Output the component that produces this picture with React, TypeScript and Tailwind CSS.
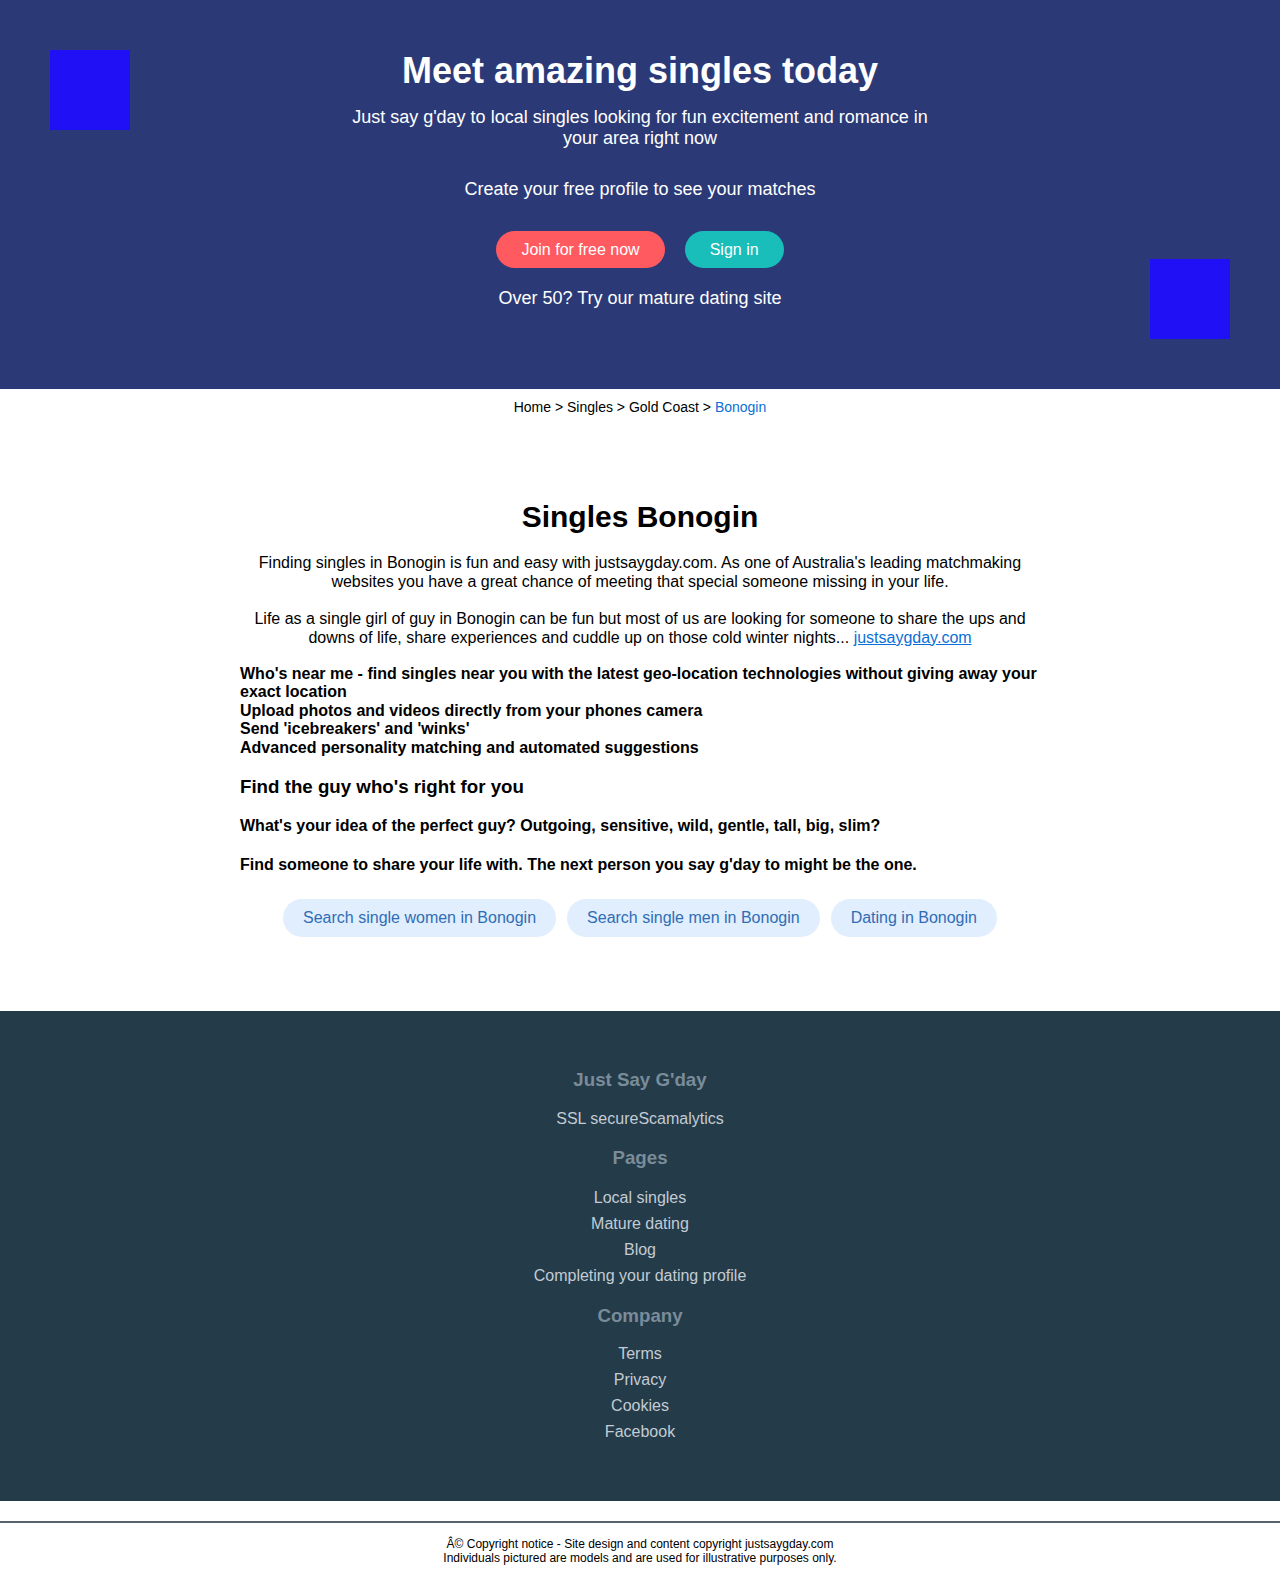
import React from "react";

const features = [
  "Who's near me - find singles near you with the latest geo-location technologies without giving away your exact location",
  "Upload photos and videos directly from your phones camera",
  "Send 'icebreakers' and 'winks'",
  "Advanced personality matching and automated suggestions",
];

const chips = [
  "Search single women in Bonogin",
  "Search single men in Bonogin",
  "Dating in Bonogin",
];

const pages = ["Local singles", "Mature dating", "Blog", "Completing your dating profile"];
const company = ["Terms", "Privacy", "Cookies", "Facebook"];

const FooterHeading: React.FC<{ children: React.ReactNode }> = ({ children }) => (
  <h4 className="text-[18.72px] font-bold leading-[21px] text-[#7a8c99]">{children}</h4>
);

const App: React.FC = () => {
  return (
    <div className="font-['Liberation_Sans',Arial,sans-serif] bg-white text-black">
      {/* hero */}
      <header className="relative bg-[#2b3a77] h-[389px] flex flex-col items-center pt-[50px] text-white text-center">
        <div className="absolute left-[50px] top-[50px] w-[80px] h-[80px] bg-[#2010f5]" />
        <div className="absolute right-[50px] top-[259px] w-[80px] h-[80px] bg-[#2010f5]" />
        <h1 className="text-[36px] font-bold leading-[41px]">Meet amazing singles today</h1>
        <p className="mt-[16px] max-w-[600px] text-[18px] leading-[21px]">
          Just say g'day to local singles looking for fun excitement and romance in your area right now
        </p>
        <p className="mt-[30px] text-[18px] leading-[21px]">Create your free profile to see your matches</p>
        <div className="mt-[31px] flex gap-[20px]">
          <a className="h-[37px] px-[25px] rounded-full bg-[#ff5a5f] text-[16px] flex items-center">
            Join for free now
          </a>
          <a className="h-[37px] px-[25px] rounded-full bg-[#19bdb9] text-[16px] flex items-center">
            Sign in
          </a>
        </div>
        <p className="mt-[20px] text-[18px] leading-[21px]">Over 50? Try our mature dating site</p>
      </header>

      {/* breadcrumb */}
      <nav className="pt-[10px] text-center text-[14px] leading-[16px]">
        Home &gt; Singles &gt; Gold Coast &gt; <span className="text-[#0a6fd6]">Bonogin</span>
      </nav>

      {/* content */}
      <main className="w-[800px] mx-auto pt-[84px] pb-[74px] text-[16px]">
        <h2 className="text-center text-[30px] font-bold leading-[35px]">Singles Bonogin</h2>
        <p className="mt-[20px] text-center leading-[18.5px] px-[12px]">
          Finding singles in Bonogin is fun and easy with justsaygday.com. As one of Australia's leading
          matchmaking websites you have a great chance of meeting that special someone missing in your life.
        </p>
        <p className="mt-[19px] text-center leading-[18.5px] px-[6px]">
          Life as a single girl of guy in Bonogin can be fun but most of us are looking for someone to share the
          ups and downs of life, share experiences and cuddle up on those cold winter nights...{" "}
          <a className="text-[#0a6fd6] underline">justsaygday.com</a>
        </p>
        <ul className="mt-[18px] font-bold leading-[18.4px]">
          {features.map((f) => (
            <li key={f}>{f}</li>
          ))}
        </ul>
        <h3 className="mt-[19px] text-[18.72px] font-bold leading-[21px]">Find the guy who's right for you</h3>
        <p className="mt-[20px] font-bold leading-[18.4px]">
          What's your idea of the perfect guy? Outgoing, sensitive, wild, gentle, tall, big, slim?
        </p>
        <p className="mt-[21px] font-bold leading-[18.4px]">
          Find someone to share your life with. The next person you say g'day to might be the one.
        </p>
        <div className="mt-[24px] flex justify-center gap-[11px]">
          {chips.map((c) => (
            <a
              key={c}
              className="h-[38px] px-[20px] rounded-full bg-[#e1eefe] text-[#2f6db5] flex items-center"
            >
              {c}
            </a>
          ))}
        </div>
      </main>

      {/* footer */}
      <footer className="bg-[#243b4a] pt-[58px] pb-[56px] flex flex-col items-center text-center">
        <FooterHeading>Just Say G'day</FooterHeading>
        <p className="mt-[16px] text-[16px] leading-[26px] text-[#c3cbd3]">SSL secureScamalytics</p>
        <div className="mt-[15px]">
          <FooterHeading>Pages</FooterHeading>
        </div>
        <ul className="mt-[17px] text-[16px] leading-[26px] text-[#c3cbd3]">
          {pages.map((p) => (
            <li key={p}>{p}</li>
          ))}
        </ul>
        <div className="mt-[16px]">
          <FooterHeading>Company</FooterHeading>
        </div>
        <ul className="mt-[15px] text-[16px] leading-[26px] text-[#c3cbd3]">
          {company.map((p) => (
            <li key={p}>{p}</li>
          ))}
        </ul>
      </footer>

      <div className="h-[20px]" />
      <hr className="border-0 h-[2px] bg-[#56626d]" />
      <div className="pt-[14px] pb-[16px] text-center text-[12px] leading-[14px]">
        <p>Â© Copyright notice - Site design and content copyright justsaygday.com</p>
        <p>Individuals pictured are models and are used for illustrative purposes only.</p>
      </div>
    </div>
  );
};

export default App;
